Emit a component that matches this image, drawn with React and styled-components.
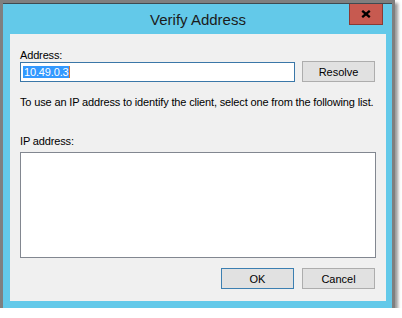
import React from "react";
import { styled, createGlobalStyle } from "styled-components";

const GlobalStyle = createGlobalStyle`
  html, body {
    margin: 0;
    padding: 0;
    background: #ffffff;
  }
  body {
    font-family: "Liberation Sans", Arial, sans-serif;
  }
`;

const App = () => {
  return (
    <>
      <GlobalStyle />
      <Window>
        <TitleBar>
          <Title>Verify Address</Title>
          <CloseButton>
            <svg width="10" height="8" viewBox="0 0 10 8">
              <path d="M1.2 0.8 L8.8 7.2 M8.8 0.8 L1.2 7.2" stroke="#000" strokeWidth="2.3" />
            </svg>
          </CloseButton>
        </TitleBar>
        <Panel>
          <Label $top={15}>Address:</Label>
          <Row>
            <TextBox>
              <Selected>10.49.0.3</Selected>
            </TextBox>
            <Button>Resolve</Button>
          </Row>
          <Hint>To use an IP address to identify the client, select one from the following list.</Hint>
          <Label $top={26}>IP address:</Label>
          <ListBox />
          <Footer>
            <Button $primary>OK</Button>
            <Button>Cancel</Button>
          </Footer>
        </Panel>
      </Window>
    </>
  );
};

export default App;

const Window = styled.div`
  width: 389px;
  height: 305px;
  margin: 3px 0 0 3px;
  box-sizing: border-box;
  display: flex;
  flex-direction: column;
  padding: 0 6px 7px 7px;
  background: #63c9e9;
  border-top: 1px solid #3f4a50;
  box-shadow: 0 0 0 3px #7f7f7f, 3px 3px 3px 3px rgba(110, 110, 110, 0.7);
`;

const TitleBar = styled.div`
  position: relative;
  height: 30px;
  flex-shrink: 0;
  display: flex;
  align-items: center;
  justify-content: center;
`;

const Title = styled.div`
  font-family: "Liberation Sans", Arial, sans-serif;
  font-size: 15px;
  color: #1b1b1b;
  margin-top: 1px;
`;

const CloseButton = styled.div`
  position: absolute;
  top: 0;
  right: 3px;
  width: 34px;
  height: 21px;
  box-sizing: border-box;
  background: #c75a50;
  border: 1px solid #8a3a34;
  border-top: none;
  display: flex;
  align-items: center;
  justify-content: center;
`;

const Panel = styled.div`
  flex: 1;
  background: #f0f0f0;
  padding: 0 10px;
  display: flex;
  flex-direction: column;
  font-family: "Liberation Sans", Arial, sans-serif;
  font-size: 11px;
  letter-spacing: -0.15px;
  color: #000;
`;

const Label = styled.div`
  margin-top: ${(p) => p.$top}px;
  height: 13px;
  line-height: 13px;
`;

const Row = styled.div`
  display: flex;
  align-items: flex-start;
  gap: 7px;
  margin-top: -1px;
`;

const TextBox = styled.div`
  width: 275px;
  height: 20px;
  margin-top: 1px;
  box-sizing: border-box;
  border: 1px solid #3a77a8;
  background: #fff;
  display: flex;
  align-items: center;
  padding-left: 2px;
`;

const Selected = styled.span`
  background: #3399ff;
  color: #fff;
  height: 12px;
  line-height: 12px;
  padding: 0 0 0 1px;
  border-right: 1px solid #d9762c;
`;

const Button = styled.div`
  width: 73px;
  height: 21px;
  box-sizing: border-box;
  background: #e1e1e1;
  border: 1px solid ${(p) => (p.$primary ? "#3c7fb1" : "#adadad")};
  display: flex;
  align-items: center;
  justify-content: center;
  letter-spacing: 0;
`;

const Hint = styled.div`
  margin-top: 14px;
  height: 13px;
  line-height: 13px;
  white-space: nowrap;
`;

const ListBox = styled.div`
  margin-top: 4px;
  height: 106px;
  box-sizing: border-box;
  border: 1px solid #828790;
  background: #fff;
`;

const Footer = styled.div`
  display: flex;
  justify-content: flex-end;
  gap: 8px;
  margin-top: 10px;
  padding-right: 1px;
`;
